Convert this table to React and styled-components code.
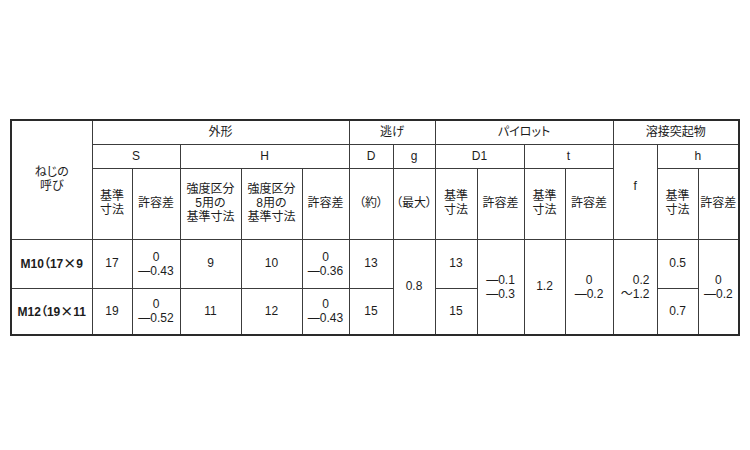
import React from "react";
import styled, { createGlobalStyle } from "styled-components";

const Global = createGlobalStyle`
  html, body { margin: 0; padding: 0; background: #ffffff; }
  body {
    font-family: "Liberation Sans", "Noto Sans CJK JP", sans-serif;
    color: #1c1c1c;
    font-feature-settings: "palt";
  }
`;

const Page = styled.div`
  width: 750px;
  height: 450px;
  box-sizing: border-box;
  padding: 119px 0 0 10px;
`;

const Table = styled.table`
  border-collapse: collapse;
  table-layout: fixed;
  width: 728px;
  border: 2px solid #2a2a2a;
`;

const Row = styled.tr`
  height: ${(p) => p.$h}px;
`;

const Cell = styled.td`
  border: 1px solid #3c3c3c;
  padding: 0;
  text-align: center;
  vertical-align: middle;
  font-size: 12px;
  line-height: ${(p) => (p.$tight ? 14 : 15)}px;
  font-weight: ${(p) => (p.$bold ? 700 : 400)};
  white-space: nowrap;
  overflow: hidden;
  padding-bottom: ${(p) => p.$pb || 0}px;
`;

const Stack = styled.span`
  display: inline-block;
  text-align: ${(p) => p.$align || "center"};
  line-height: 14px;
`;

const Cross = styled.span`
  font-family: "Noto Sans CJK JP", sans-serif;
  font-size: 13px;
  font-weight: 700;
`;

const widths = [81, 40, 48, 61, 61, 47, 44, 42, 42, 47, 41, 48, 44, 41, 41];

const Lines = ({ items, align }) => (
  <Stack $align={align}>
    {items.map((t, i) => (
      <React.Fragment key={i}>
        {i > 0 && <br />}
        {t}
      </React.Fragment>
    ))}
  </Stack>
);

const M = "—";

export default function App() {
  return (
    <>
      <Global />
      <Page>
        <Table>
          <colgroup>
            {widths.map((w, i) => (
              <col key={i} style={{ width: w }} />
            ))}
          </colgroup>
          <tbody>
            <Row $h={24}>
              <Cell rowSpan={3}>
                <Lines items={["ねじの", "呼び"]} />
              </Cell>
              <Cell colSpan={5}>外形</Cell>
              <Cell colSpan={2}>逃げ</Cell>
              <Cell colSpan={4}>パイロット</Cell>
              <Cell colSpan={3}>溶接突起物</Cell>
            </Row>
            <Row $h={24}>
              <Cell colSpan={2}>S</Cell>
              <Cell colSpan={3}>H</Cell>
              <Cell>D</Cell>
              <Cell>g</Cell>
              <Cell colSpan={2}>D1</Cell>
              <Cell colSpan={2}>t</Cell>
              <Cell rowSpan={2} $pb={10}>f</Cell>
              <Cell colSpan={2}>h</Cell>
            </Row>
            <Row $h={71}>
              <Cell><Lines items={["基準", "寸法"]} /></Cell>
              <Cell>許容差</Cell>
              <Cell><Lines items={["強度区分", "5用の", "基準寸法"]} /></Cell>
              <Cell><Lines items={["強度区分", "8用の", "基準寸法"]} /></Cell>
              <Cell>許容差</Cell>
              <Cell>（約）</Cell>
              <Cell>（最大）</Cell>
              <Cell><Lines items={["基準", "寸法"]} /></Cell>
              <Cell>許容差</Cell>
              <Cell><Lines items={["基準", "寸法"]} /></Cell>
              <Cell>許容差</Cell>
              <Cell><Lines items={["基準", "寸法"]} /></Cell>
              <Cell>許容差</Cell>
            </Row>
            <Row $h={49}>
              <Cell $bold>M10（17<Cross>×</Cross>9</Cell>
              <Cell>17</Cell>
              <Cell $tight><Lines items={["0", `${M}0.43`]} /></Cell>
              <Cell>9</Cell>
              <Cell>10</Cell>
              <Cell $tight><Lines items={["0", `${M}0.36`]} /></Cell>
              <Cell>13</Cell>
              <Cell rowSpan={2}>0.8</Cell>
              <Cell>13</Cell>
              <Cell rowSpan={2} $tight><Lines items={[`${M}0.1`, `${M}0.3`]} /></Cell>
              <Cell rowSpan={2}>1.2</Cell>
              <Cell rowSpan={2} $tight><Lines items={["0", `${M}0.2`]} /></Cell>
              <Cell rowSpan={2} $tight><Lines align="right" items={["0.2", "〜1.2"]} /></Cell>
              <Cell>0.5</Cell>
              <Cell rowSpan={2} $tight><Lines items={["0", `${M}0.2`]} /></Cell>
            </Row>
            <Row $h={47}>
              <Cell $bold>M12（19<Cross>×</Cross>11</Cell>
              <Cell>19</Cell>
              <Cell $tight><Lines items={["0", `${M}0.52`]} /></Cell>
              <Cell>11</Cell>
              <Cell>12</Cell>
              <Cell $tight><Lines items={["0", `${M}0.43`]} /></Cell>
              <Cell>15</Cell>
              <Cell>15</Cell>
              <Cell>0.7</Cell>
            </Row>
          </tbody>
        </Table>
      </Page>
    </>
  );
}
